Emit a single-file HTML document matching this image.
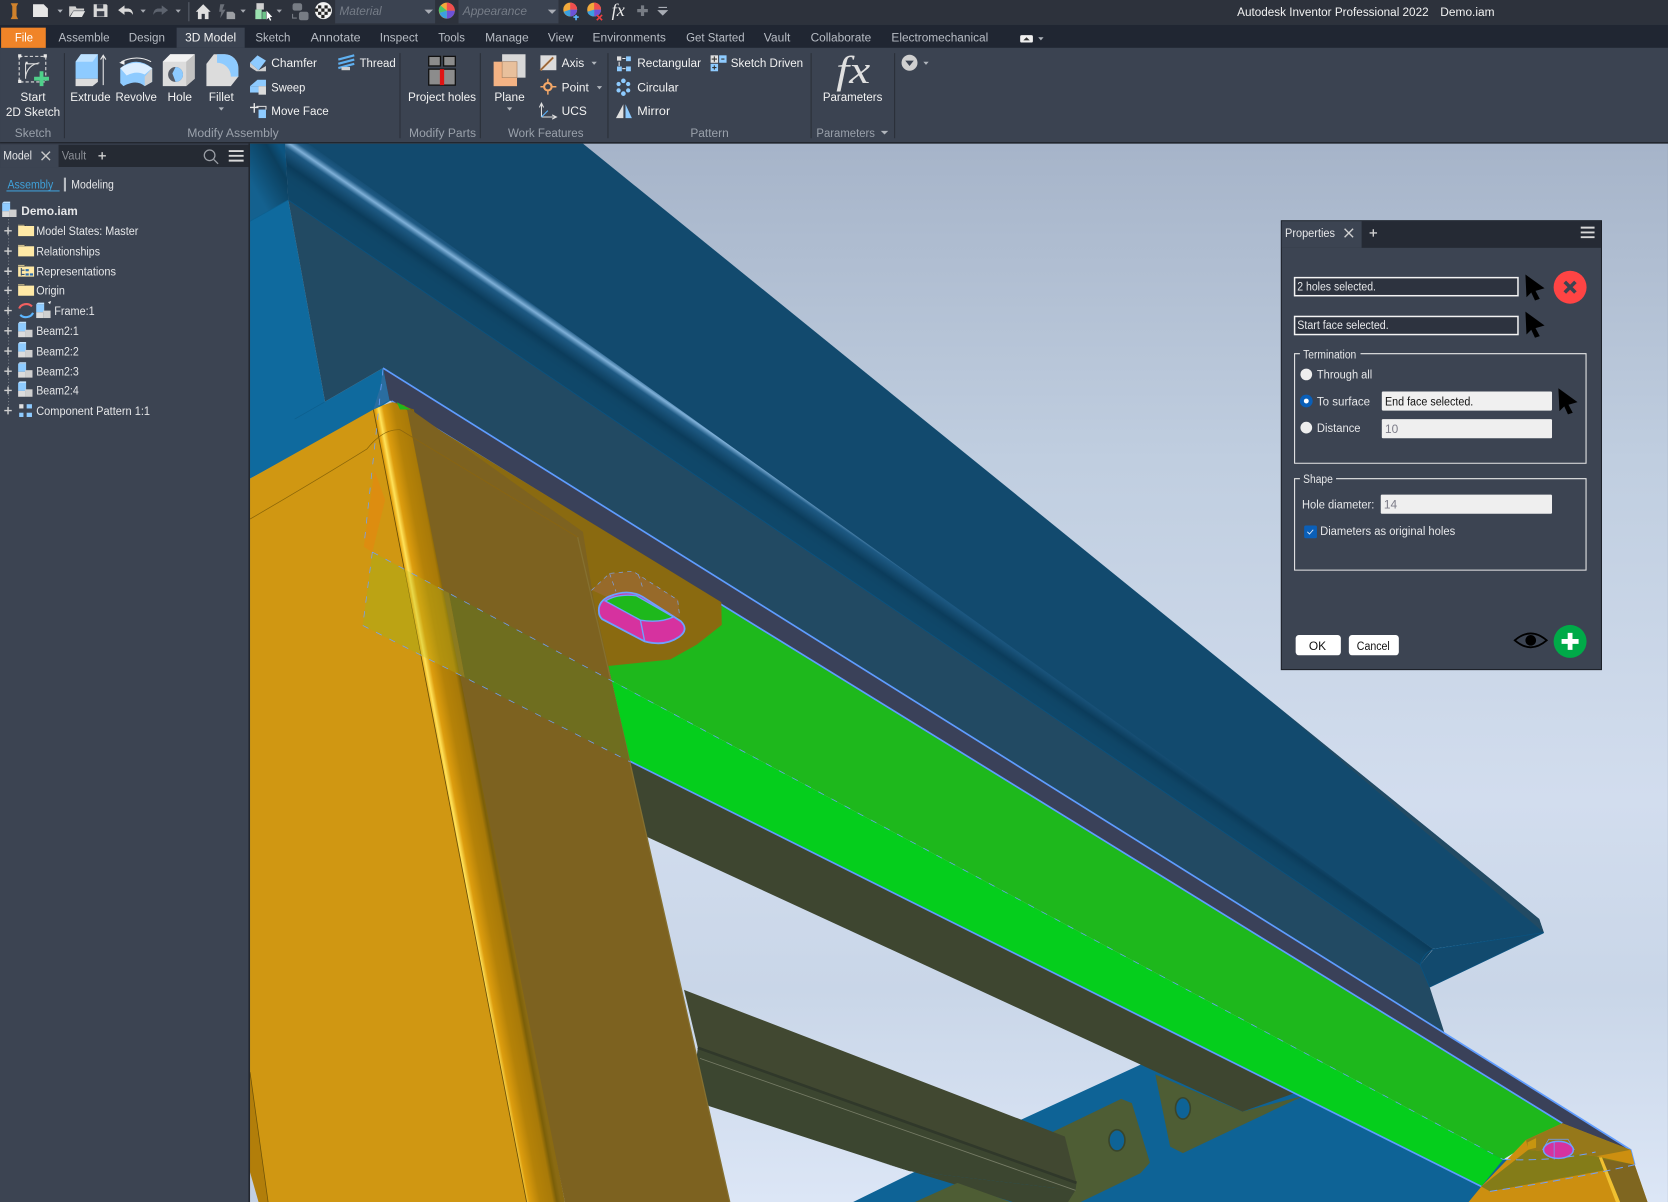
<!DOCTYPE html>
<html lang="en"><head><meta charset="utf-8"><title>Autodesk Inventor Professional 2022 - Demo.iam</title>
<style>html,body{margin:0;padding:0;background:#3c4452;overflow:hidden}svg{display:block}
text{font-family:"Liberation Sans",sans-serif;font-size:11.2px;fill:#e6e7e9}
.t{fill:#b8bdc5}.l{fill:#9aa1ab;text-anchor:middle}.c{text-anchor:middle}.w{fill:#f2f2f2}.d{fill:#111}.g{fill:#8b8f96}
</style></head><body>
<svg xmlns="http://www.w3.org/2000/svg" xmlns:xlink="http://www.w3.org/1999/xlink" width="1668" height="1202" viewBox="0 0 1568 1130">
<defs>
<linearGradient id="bg" x1="0" y1="135" x2="0" y2="1130" gradientUnits="userSpaceOnUse"><stop offset="0" stop-color="#a6b4c9"/><stop offset=".3" stop-color="#c0cee0"/><stop offset=".62" stop-color="#d2ddee"/><stop offset=".8" stop-color="#c9d6e8"/><stop offset="1" stop-color="#dce6f6"/></linearGradient>
<linearGradient id="roll" gradientUnits="userSpaceOnUse" x1="276" y1="124" x2="252" y2="159"><stop offset="0" stop-color="#124a6e"/><stop offset=".16" stop-color="#1f5a84"/><stop offset=".27" stop-color="#7fb0d8"/><stop offset=".38" stop-color="#1e5a84"/><stop offset=".68" stop-color="#0b3c5b"/><stop offset=".85" stop-color="#0f4566"/><stop offset="1" stop-color="#0f4769"/></linearGradient>
<linearGradient id="col" gradientUnits="userSpaceOnUse" x1="351" y1="385" x2="389" y2="378"><stop offset="0" stop-color="#d0920f"/><stop offset=".05" stop-color="#e9a814"/><stop offset=".13" stop-color="#ffe35a"/><stop offset=".24" stop-color="#dd9d0e"/><stop offset=".5" stop-color="#b58208"/><stop offset=".8" stop-color="#a97a08"/><stop offset=".9" stop-color="#7b5f08"/><stop offset="1" stop-color="#8a6a12"/></linearGradient>
<linearGradient id="tl" gradientUnits="userSpaceOnUse" x1="235" y1="170" x2="270" y2="150"><stop offset="0" stop-color="#14618f"/><stop offset=".75" stop-color="#0b3f5e"/><stop offset="1" stop-color="#0d5581"/></linearGradient>
<g id="part"><rect x="0" y="0" width="7.500" height="7.500" fill="#8ecbff"/><path d="M0 0l1.500-1.500h6L7.500 0z" fill="#bfe2ff"/><rect x="0" y="7.500" width="6.500" height="5.500" fill="#dcdcdc"/><rect x="6.500" y="6" width="7" height="7" fill="#d0d0d0"/></g>
<g id="folder"><path d="M0 0h7l1 1.500h7v9.500H0z" fill="#ffe9a6"/><path d="M0 0h7l1 1.500H0z" fill="#2f3540"/><path d="M0 .7h6" stroke="#ffe9a6" stroke-width=".7"/></g>
<g id="plus"><path d="M-3.500 0h7M0-3.500v7" stroke="#d0d0d0" stroke-width="1.300"/></g>
<path id="cur" d="M0 0L18 13L9.500 15.500L13.500 23L9 24.500L5.500 17L1 21.500z" fill="#000"/>
</defs>

<!-- 3D scene -->
<rect x="235" y="135" width="1333" height="995" fill="url(#bg)"/>
<!-- floor plate -->
<polygon points="802,1130 959,1053 1072,1001 1100,940 1500,1130" fill="#0e6396"/>
<!-- flanges and beams -->
<polygon points="1086,1010 1100,1078 1112,1084 1226,1030 1168,1045" fill="#4e5d34"/>
<ellipse cx="1112" cy="1042" rx="7" ry="10" fill="#0e6396" stroke="#3a452a" stroke-width="1.500"/>
<polygon points="592,716 1216,1028 1168,1045 600,783" fill="#3e4630"/>
<polygon points="990,1064 1054,1033 1064,1037 1081,1093 1072,1103 1016,1130 992,1130" fill="#4e5d34"/>
<ellipse cx="1050" cy="1072" rx="7.500" ry="10" fill="#0e6396" stroke="#3a452a" stroke-width="1.500"/>
<polygon points="643,930.600 1001,1068.400 1012,1112 656,985" fill="#414831"/>
<polygon points="656,985 1012,1112 1011,1119 855,1101 667,1040 650,1030" fill="#3c4630"/>
<polygon points="855,1101 1011,1119 1004,1130 952,1130 820,1090" fill="#3c4630"/>
<path d="M656 985L1012 1112" stroke="#30382a" stroke-width="2.500"/><path d="M658 995L1011 1119" stroke="#767c66" stroke-width=".8"/>
<polygon points="860,1130 900,1112 950,1130" fill="#4e5d34"/>
<!-- roof -->
<polygon points="235,135 268,135 271,188 235,208" fill="url(#tl)"/>
<polygon points="235,208 271,188 305.500,377.600 360,346 368,376 352,386 235,450" fill="#0f6a9e"/>
<path d="M235 208L271 188M305 378L277 394" stroke="#0d5f8e" stroke-width=".7" fill="none"/>
<polygon points="271,188 268,135 1347,892 1335,907 1344,928 1358,971.300 360,346 305.500,377.600" fill="#224a63"/>
<polygon points="268,135 548,135 1402,827 1447,864 1451.300,876.700 1347,892" fill="#124a6e"/>
<polygon points="1198,662 1402,827 1447,864 1451.300,876.700" fill="#224a63"/>
<polygon points="268,135 290,135 1347,892 1335,907 271,188" fill="url(#roll)"/>
<polygon points="1335,907 1347.300,892.400 1451.300,876.700 1344,928" fill="#124a6e"/>
<path d="M1335 907Q1338 896 1347.300 892.400L1451.300 876.700M271 188L1335 907L1344 928M1451 877L1344 928" stroke="#0a527f" stroke-width=".8" fill="none"/>
<!-- green -->
<polygon points="368,376 1468.700,1056 1413,1090 575,640 542,503" fill="#1eb81c"/>
<polygon points="575,640 1413,1090 1392.600,1115.400 592,715.600" fill="#05ce1c"/>
<!-- strip -->
<polygon points="360,346 1533,1081 1536.700,1095 1468.700,1056 366,376" fill="#3a4159"/>
<path d="M360 346L1533 1081L1536.700 1095M368 377L1468.700 1056M592 715.600L1392.600 1115.400" stroke="#5f9cff" stroke-width="1.600" fill="none"/>
<polygon points="360,346 366,376 351,385 358,362" fill="#2a6da0"/>
<!-- orange box -->
<polygon points="235,450 351,385 495,1130 235,1130" fill="#d09712"/>
<polygon points="235,1008 252,1130 243,1130 235,1105" fill="#b27e0a"/><polygon points="235,1102 243,1130 235,1130" fill="#c2cfe2"/>
<path d="M235 1008L252 1130" stroke="#6d5208" stroke-width=".7"/>
<polygon points="351,385 360,381 369,378 389,385 531,1130 495,1130" fill="url(#col)"/>
<path d="M351 385L495 1130" stroke="#6a4f07" stroke-width=".8" fill="none"/>
<path d="M235 488Q300 450 345 422Q360 403 376 404" stroke="#8a6508" stroke-width=".7" fill="none"/>
<polygon points="380,381 370,378 678,566 678.500,587.500 655,606 630,620 573,626 565,626 535,500" fill="#8a6a10"/>
<polygon points="382,382 548,500 558,564 592,715.600 686,1130 531,1130" fill="#7d6220"/>
<path d="M376 404L543 505" stroke="#8a6510" stroke-width=".7" fill="none"/>
<polygon points="373,378 386,385 376,385" fill="#1eb81c"/>
<polygon points="352,442 342,514 350,519 362,470" fill="#dd8d10"/>
<path d="M543 505L592 716L686 1130" stroke="#857030" stroke-width="1.200" fill="none"/>
<polygon points="350,519 341,588 395.500,616 380,535" fill="#bca314"/>
<polygon points="380,535 395.500,616 437,637 422,557.500" fill="#b0c020" fill-opacity=".28"/>
<polygon points="422,557.500 437,637 592,716 575,640" fill="#6f6e1f"/>
<path d="M350 519L575 640L1413 1090M341 588L592 716M350 519L341 588M360 347L342 514" stroke="#6fa0ff" stroke-width=".7" stroke-dasharray="6 8" fill="none"/>
<!-- hole -->
<polygon points="556,554.600 573.400,539 595.300,537.300 637.600,564 639,580 600,575" fill="#976a2a"/>
<path d="M556 555L573 539L595 537L637 564L639 580M573 539L579 556M600 540L604 552" stroke="#7ba6f5" stroke-width=".6" stroke-dasharray="4 4" fill="none"/>
<path d="M563 575Q562 566 572 561Q590 553 604 561L640 584Q648 592 638 599Q625 608 606 603L566 582Q563 579 563 575z" fill="#d6329f" stroke="#6fa0ff" stroke-width="1.700"/>
<path d="M569 565Q580 558 598 560L633 580Q620 586 602 583z" fill="#1eb81c" stroke="#6fa0ff" stroke-width="1.300"/>
<path d="M602 583L606 603" stroke="#6fa0ff" stroke-width="1.300"/>
<!-- far corner -->
<polygon points="1392.600,1115.400 1434.600,1071.600 1468.700,1056 1533,1081 1536.700,1095 1548.800,1130 1380.600,1130" fill="#cc8f10"/>
<polygon points="1434.600,1071.600 1468.700,1056 1532.700,1081 1500.700,1087 1436.600,1081" fill="#96781a"/>
<polygon points="1392.600,1115.400 1436.600,1081 1500.700,1087 1536.700,1095 1400.600,1120" fill="#847c18"/>
<polygon points="1502.700,1088.800 1536.700,1095 1548.800,1130 1520.700,1130" fill="#7f6620"/>
<polygon points="1503,1088 1506,1088 1523,1130 1519,1130" fill="#f0c030"/>
<polygon points="1436,1074 1444,1070 1444,1079 1436,1081" fill="#c79510"/>
<path d="M1400.600 1120Q1470 1110 1536.700 1095M1413 1090Q1460 1092 1500 1083" stroke="#6fa0ff" stroke-width=".9" stroke-dasharray="7 5" fill="none"/>
<ellipse cx="1465" cy="1081" rx="14" ry="8" fill="#d6329f" stroke="#6fa0ff" stroke-width="1.400"/>
<path d="M1450 1081L1456 1071L1474 1071L1480 1081M1461 1073V1090" stroke="#6fa0ff" stroke-width=".7" fill="none"/>

<!-- title bar -->
<rect x="0" y="0" width="1568" height="23.500" fill="#2d323c"/>
<rect x="0" y="23.500" width="1568" height="21.500" fill="#202632"/>
<rect x="0" y="45" width="1568" height="88.500" fill="#3b4351"/>
<rect x="0" y="133.500" width="1568" height="1.500" fill="#23272f"/>
<rect x="0" y="135" width="235" height="995" fill="#3c4452"/>
<rect x="0" y="136" width="235" height="21" fill="#252a33"/>
<rect x="0" y="136" width="55" height="21" fill="#3c4452"/>
<rect x="233.500" y="135" width="1.500" height="995" fill="#23272f"/>

<!-- quick access -->
<path d="M10 3h7l-1.500 3v9l1.500 3h-7l1.500-3V6z" fill="#d0822c"/>
<path d="M31 4h10l4 4v8H31z" fill="#e6e6e6"/><path d="M54 9h5l-2.500 3z" fill="#b0b5bc"/>
<path d="M65 6h6l1 2h7v2H69l-4 6z" fill="#d0d0d0"/><path d="M69 10.500h11l-3 5.500H66z" fill="#e2e2e2"/>
<path d="M88 4h12l1 1v11H88z" fill="#d8d8d8"/><rect x="91" y="4" width="6" height="4" fill="#3a3f4a"/><rect x="91" y="10.500" width="7" height="5" fill="#3a3f4a"/>
<path d="M111 9.500l6-4.500v3h4q4 1 4 6-2-3-4-3h-4v3z" fill="#d8d8d8"/><path d="M132 9h5l-2.500 3zM165 9h5l-2.500 3zM226 9h5l-2.500 3zM260 9h5l-2.500 3z" fill="#a5a9b0"/>
<path d="M158 9.500l-6-4.500v3h-4q-4 1-4 6 2-3 4-3h4v3z" fill="#5d636e"/>
<rect x="177" y="2" width="1" height="18" fill="#5a606b"/>
<path d="M184 11l7-7 7 7h-2v7h-3.500v-5h-3v5H186v-7z" fill="#e0e0e0"/>
<path d="M207 4h4l-2 5h3l-5 8 1-6h-2z" fill="#6a6f78"/><path d="M213 11h6l2 2v5h-8z" fill="#9c9fa4"/>
<rect x="241" y="3" width="7" height="6" fill="#d0d0d0"/><rect x="240" y="9" width="6" height="9" fill="#9be2b0"/><rect x="246.500" y="11" width="3.500" height="7" fill="#6cc388"/><path d="M250.500 10v8.500l2-1.800 1.300 2.800 1.200-.6-1.400-2.700 2.300-.3z" fill="#fff"/>
<rect x="275" y="3" width="9" height="7" rx="2" fill="#777c84"/><rect x="281" y="11" width="9" height="8" rx="2" fill="#777c84"/><path d="M275 13v4h4" stroke="#777c84" fill="none"/>
<circle cx="304" cy="10" r="8" fill="#f2f2f2"/><path d="M299 5h3v3h-3zM305 5h3v3h-3zM302 8h3v3h-3zM308 8h3v3h-3zM296 8h3v3h-3zM299 11h3v3h-3zM305 11h3v3h-3zM302 14h3v3h-3z" fill="#222"/>
<rect x="315" y="0" width="94" height="22" fill="#3b4351"/><text x="319" y="14" font-style="italic" style="fill:#767d88">Material</text><path d="M399 9h8l-4 4z" fill="#a9adb5"/>
<circle cx="420" cy="10" r="7.500" fill="#f2a93b"/><path d="M420 10V2.500A7.500 7.500 0 0 1 427.500 10z" fill="#ef4e4e"/><path d="M420 10h7.500A7.500 7.500 0 0 1 420 17.500z" fill="#6d52d8"/><path d="M420 10v7.500A7.500 7.500 0 0 1 413 12z" fill="#3aa0e0"/><path d="M420 10l-7 2A7.500 7.500 0 0 1 414 5z" fill="#47c56b"/>
<rect x="431" y="0" width="94" height="22" fill="#3b4351"/><text x="435" y="14" font-style="italic" style="fill:#767d88">Appearance</text><path d="M515 9h8l-4 4z" fill="#a9adb5"/>
<circle cx="536" cy="9" r="6.500" fill="#f2a93b"/><path d="M536 9V2.500A6.500 6.500 0 0 1 542.500 9z" fill="#ef4e4e"/><path d="M536 9h6.500A6.500 6.500 0 0 1 536 15.500z" fill="#6d52d8"/><path d="M536 9v6.500A6.500 6.500 0 0 1 530 11z" fill="#3aa0e0"/><path d="M539 16h5M541.500 14v5" stroke="#5db6ff" stroke-width="1.500"/>
<circle cx="558.500" cy="9" r="6.500" fill="#f2a93b"/><path d="M558.500 9V2.500A6.500 6.500 0 0 1 565 9z" fill="#ef4e4e"/><path d="M558.500 9h6.500A6.500 6.500 0 0 1 558.500 15.500z" fill="#6d52d8"/><path d="M558.500 9v6.500A6.500 6.500 0 0 1 552 11z" fill="#3aa0e0"/><path d="M561 14l5 5M566 14l-5 5" stroke="#ef4040" stroke-width="1.500"/>
<text x="575" y="15" style="font-family:'Liberation Serif',serif;font-style:italic;font-size:17px;fill:#e8e8e8">fx</text>
<path d="M604 5v10M599 10h10" stroke="#777c84" stroke-width="3"/><path d="M619 7h8M619 10h8l-4 4z" stroke="#a9adb5" fill="#a9adb5"/>
<text x="1163" y="15" textLength="180" lengthAdjust="spacingAndGlyphs" class="w">Autodesk Inventor Professional 2022</text>
<text x="1354" y="15" textLength="51" lengthAdjust="spacingAndGlyphs" class="w">Demo.iam</text>

<!-- tabs -->
<rect x="1" y="26" width="42" height="19" fill="#f08428"/><text x="14" y="39" class="w" textLength="17" lengthAdjust="spacingAndGlyphs" style="fill:#fff">File</text>
<rect x="166" y="26" width="64" height="19" fill="#3b4351"/>
<g class="tabs">
<text x="55" y="39" class="t" textLength="48" lengthAdjust="spacingAndGlyphs">Assemble</text>
<text x="121" y="39" class="t" textLength="34" lengthAdjust="spacingAndGlyphs">Design</text>
<text x="174" y="39" class="w" textLength="48" lengthAdjust="spacingAndGlyphs">3D Model</text>
<text x="240" y="39" class="t" textLength="33" lengthAdjust="spacingAndGlyphs">Sketch</text>
<text x="292" y="39" class="t" textLength="47" lengthAdjust="spacingAndGlyphs">Annotate</text>
<text x="357" y="39" class="t" textLength="36" lengthAdjust="spacingAndGlyphs">Inspect</text>
<text x="412" y="39" class="t" textLength="25" lengthAdjust="spacingAndGlyphs">Tools</text>
<text x="456" y="39" class="t" textLength="41" lengthAdjust="spacingAndGlyphs">Manage</text>
<text x="515" y="39" class="t" textLength="24" lengthAdjust="spacingAndGlyphs">View</text>
<text x="557" y="39" class="t" textLength="69" lengthAdjust="spacingAndGlyphs">Environments</text>
<text x="645" y="39" class="t" textLength="55" lengthAdjust="spacingAndGlyphs">Get Started</text>
<text x="718" y="39" class="t" textLength="25" lengthAdjust="spacingAndGlyphs">Vault</text>
<text x="762" y="39" class="t" textLength="57" lengthAdjust="spacingAndGlyphs">Collaborate</text>
<text x="838" y="39" class="t" textLength="91" lengthAdjust="spacingAndGlyphs">Electromechanical</text>
</g>
<rect x="959" y="33" width="12" height="7" rx="1.500" fill="#f0f0f0"/><path d="M962 38h6l-3-3z" fill="#333"/><path d="M976 35h5l-2.500 3z" fill="#b0b5bc"/>

<!-- ribbon separators -->
<path d="M60.500 50v80M376 50v80M451.500 50v80M571.500 50v80M762.500 50v80M841 50v80" stroke="#2a2f38" stroke-width="1"/>

<!-- ribbon icons -->
<g fill="none" stroke="#e0e0e0"><rect x="18" y="53" width="25" height="24" stroke-dasharray="3 2"/><path d="M24 74V60h12" stroke-width="1"/><path d="M24 72q2-11 13-13" stroke-width="1"/></g>
<path d="M17 51h3v3h-3zM41 51h3v3h-3zM17 75h3v3h-3zM24 58h2v2h-2z" fill="#e8e8e8"/><path d="M39 67v14M32 74h14" stroke="#4fd08a" stroke-width="3.600"/>
<polygon points="71,58 76,51 92,51 92,74 71,74" fill="#8ecbff"/><polygon points="71,58 76,51 92,51 87,58" fill="#bfe2ff"/><polygon points="71,74 92,74 92,77 87,81 71,81" fill="#dcdcdc"/><path d="M97 80V53m-2.500 3l2.500-4 2.500 4" stroke="#e8e8e8" fill="none"/>
<path d="M113 64q15-12 30 0v13l-7 4q-8-7-20 0l-3-3z" fill="#8ecbff"/><path d="M113 64q15-10 30 0l-7 6q-8-4-17 1z" fill="#dceeff"/><path d="M136 72l7-8v13l-7 4z" fill="#cfcfcf"/><path d="M114 58q15-7 28 0" stroke="#f0f0f0" fill="none"/><path d="M112 59l5-2v4z" fill="#f0f0f0"/>
<polygon points="153,58 160,51 183,51 183,74 175,81 153,81" fill="#dcdcdc"/><polygon points="153,58 160,51 183,51 175,58" fill="#f2f2f2"/><polygon points="175,58 183,51 183,74 175,81" fill="#c2c2c2"/><circle cx="165" cy="70" r="7" fill="#555b66"/><path d="M165 63a7 7 0 0 1 0 14l-3-8z" fill="#8ecbff"/>
<path d="M194 60l7-9h10a13 13 0 0 1 13 13v8l-7 9h-23z" fill="#dcdcdc"/><path d="M204 51h7a13 13 0 0 1 13 13v8l-7 0a13 13 0 0 0-13-13z" fill="#8ecbff"/>
<polygon points="235,59 242,52 250,57 243,66" fill="#8ecbff"/><polygon points="235,59 243,66 250,62 250,67 241,67 235,63" fill="#cfcfcf"/>
<polygon points="235,81 242,75 250,75 250,81" fill="#8ecbff"/><rect x="235" y="81" width="8" height="6" fill="#8ecbff"/><rect x="243" y="81" width="7" height="8" fill="#dcdcdc"/>
<path d="M239 97v9M235 101h8" stroke="#e8e8e8" stroke-width="1.300"/><rect x="243" y="103" width="7" height="8" fill="#8ecbff"/><path d="M241 100h9v3" stroke="#e0e0e0" fill="none"/>
<path d="M318 56l15-4M318 60l15-4M318 64l15-4" stroke="#5fb0f0" stroke-width="2"/><rect x="321" y="63" width="8" height="3" fill="#cfcfcf"/>
<g stroke="#111" stroke-width="1.200"><rect x="403" y="53" width="11" height="9" fill="#8c8c8c"/><rect x="417" y="53" width="11" height="9" fill="#8c8c8c"/><rect x="403" y="65" width="12" height="15" fill="#8c8c8c"/><rect x="416" y="65" width="12" height="15" fill="#8c8c8c"/></g><rect x="413.500" y="65" width="4" height="15" fill="#e01414"/><path d="M415.500 52v12" stroke="#444" stroke-dasharray="2 2"/>
<rect x="472" y="51" width="22" height="22" fill="#d8d8d8"/><rect x="464" y="58" width="22" height="23" fill="#f4b384"/><rect x="472" y="58" width="14" height="15" fill="#e8c09c" stroke="#a88060" stroke-width=".6"/>
<rect x="508" y="52" width="15" height="14" fill="#dcdcdc"/><path d="M508 66l12-12" stroke="#c98a4e" stroke-width="2"/><path d="M508 66l12-12" stroke="#59402a" stroke-width=".6"/>
<path d="M515 74v15M508 81.500h15" stroke="#f4a868" stroke-width="1.400"/><circle cx="515" cy="81.500" r="3.500" fill="#3b4351" stroke="#f4a868" stroke-width="2"/>
<path d="M509 110V98M509 110h13" stroke="#e0e0e0" fill="none"/><path d="M507 101l2-4 2 4M519 108l4 2-4 2" stroke="#e0e0e0" fill="none"/><path d="M509 110l6-6" stroke="#5db6ff"/>
<g fill="#8ecbff"><rect x="580" y="53" width="4" height="4" fill="#e0e0e0"/><rect x="588.500" y="53" width="4.500" height="4.500"/><rect x="580" y="62.500" width="4.500" height="4.500"/><rect x="588.500" y="62.500" width="4.500" height="4.500"/></g><path d="M582 58v4M585 55h3M585 64.500h3" stroke="#e8e8e8"/>
<g fill="#8ecbff"><circle cx="586" cy="76" r="2.200"/><circle cx="581.500" cy="79" r="2"/><circle cx="590.500" cy="79" r="2"/><circle cx="581.500" cy="85" r="2"/><circle cx="590.500" cy="85" r="2"/><circle cx="586" cy="88" r="2.200"/></g>
<polygon points="579,111 586,98 586,111" fill="#e0e0e0"/><polygon points="588,98 594,111 588,111" fill="#8ecbff"/>
<rect x="668" y="52" width="7" height="7" fill="#e0e0e0"/><path d="M669 55.500h5M671.500 53v5" stroke="#333"/><rect x="676" y="52" width="7" height="7" fill="#8ecbff"/><rect x="668" y="60" width="7" height="7" fill="#8ecbff"/><path d="M678 55.500h3M669.500 63.500h4M671.500 61.500v4" stroke="#333"/>
<text x="786" y="78" textLength="32" lengthAdjust="spacingAndGlyphs" style="font-family:'Liberation Serif',serif;font-style:italic;font-size:37px;fill:#e0e0e0">fx</text>
<circle cx="855" cy="59" r="7.500" fill="#d0d0d0"/><path d="M851 57h8l-4 5z" fill="#3b4351"/><path d="M868 58h5l-2.500 3z" fill="#b0b5bc"/>
<path d="M205.500 101h5l-2.500 3zM476.500 101h5l-2.500 3zM556 58h5l-2.500 3zM561 81h5l-2.500 3zM828 123h7l-3.500 3.500z" fill="#b0b5bc"/>

<!-- ribbon text -->
<text x="31" y="95" class="c w">Start</text><text x="31" y="109" class="c w" textLength="51" lengthAdjust="spacingAndGlyphs">2D Sketch</text>
<text x="85" y="95" class="c w" textLength="38" lengthAdjust="spacingAndGlyphs">Extrude</text><text x="128" y="95" class="c w" textLength="39" lengthAdjust="spacingAndGlyphs">Revolve</text><text x="169" y="95" class="c w">Hole</text><text x="208" y="95" class="c w">Fillet</text>
<text x="255" y="63" class="w" textLength="43" lengthAdjust="spacingAndGlyphs">Chamfer</text><text x="338" y="63" class="w" textLength="34" lengthAdjust="spacingAndGlyphs">Thread</text><text x="255" y="86" class="w" textLength="32" lengthAdjust="spacingAndGlyphs">Sweep</text><text x="255" y="108" class="w" textLength="54" lengthAdjust="spacingAndGlyphs">Move Face</text>
<text x="415.500" y="95" class="c w" textLength="64" lengthAdjust="spacingAndGlyphs">Project holes</text><text x="479" y="95" class="c w">Plane</text>
<text x="528" y="63" class="w">Axis</text><text x="528" y="86" class="w">Point</text><text x="528" y="108" class="w">UCS</text>
<text x="599" y="63" class="w" textLength="60" lengthAdjust="spacingAndGlyphs">Rectangular</text><text x="599" y="86" class="w" textLength="39" lengthAdjust="spacingAndGlyphs">Circular</text><text x="599" y="108" class="w" textLength="31" lengthAdjust="spacingAndGlyphs">Mirror</text><text x="687" y="63" class="w" textLength="68" lengthAdjust="spacingAndGlyphs">Sketch Driven</text>
<text x="801.500" y="95" class="c w" textLength="56" lengthAdjust="spacingAndGlyphs">Parameters</text>
<text x="31" y="129" class="l">Sketch</text><text x="219" y="129" class="l" textLength="86" lengthAdjust="spacingAndGlyphs">Modify Assembly</text><text x="416" y="129" class="l" textLength="63" lengthAdjust="spacingAndGlyphs">Modify Parts</text><text x="513" y="129" class="l" textLength="71" lengthAdjust="spacingAndGlyphs">Work Features</text><text x="667" y="129" class="l">Pattern</text><text x="795" y="129" class="l" textLength="55" lengthAdjust="spacingAndGlyphs">Parameters</text>

<!-- browser -->
<text x="3" y="150" textLength="27" lengthAdjust="spacingAndGlyphs">Model</text><path d="M39 142.500l8 8M47 142.500l-8 8" stroke="#c8c8c8" stroke-width="1.300"/>
<text x="58" y="150" class="g" textLength="23" lengthAdjust="spacingAndGlyphs">Vault</text><use xlink:href="#plus" href="#plus" x="96" y="146.500"/>
<circle cx="197" cy="146" r="5" fill="none" stroke="#9a9ea5" stroke-width="1.200"/><path d="M201 150l4 4" stroke="#9a9ea5" stroke-width="1.200"/>
<path d="M215 142h14M215 146.500h14M215 151h14" stroke="#d8d8d8" stroke-width="1.800"/>
<text x="7" y="177" style="fill:#3fa0d8" textLength="43" lengthAdjust="spacingAndGlyphs">Assembly</text><rect x="6" y="179" width="50" height="1" fill="#3fa0d8"/><rect x="60" y="167" width="2" height="13" fill="#b8bcc2"/><text x="67" y="177" textLength="40" lengthAdjust="spacingAndGlyphs">Modeling</text>
<use xlink:href="#part" href="#part" x="2" y="191"/><text x="20" y="202" font-weight="700" textLength="53" lengthAdjust="spacingAndGlyphs">Demo.iam</text>
<path d="M8 206V386" stroke="#777c86" stroke-dasharray="1 2"/>
<g id="tree">
<use xlink:href="#plus" href="#plus" x="7.500" y="217"/><use xlink:href="#plus" href="#plus" x="7.500" y="236"/><use xlink:href="#plus" href="#plus" x="7.500" y="255"/><use xlink:href="#plus" href="#plus" x="7.500" y="273"/><use xlink:href="#plus" href="#plus" x="7.500" y="292"/><use xlink:href="#plus" href="#plus" x="7.500" y="311"/><use xlink:href="#plus" href="#plus" x="7.500" y="330"/><use xlink:href="#plus" href="#plus" x="7.500" y="349"/><use xlink:href="#plus" href="#plus" x="7.500" y="367"/><use xlink:href="#plus" href="#plus" x="7.500" y="386"/>
<use xlink:href="#folder" href="#folder" x="17" y="211"/><use xlink:href="#folder" href="#folder" x="17" y="230"/><use xlink:href="#folder" href="#folder" x="17" y="249"/><use xlink:href="#folder" href="#folder" x="17" y="267"/>
<path d="M20 252v7M20 254h3M20 258h3" stroke="#36506e" fill="none"/><rect x="24" y="253" width="3" height="2" fill="#2a6db0"/><rect x="24" y="257" width="3" height="2" fill="#2a6db0"/><rect x="28" y="257" width="3" height="2" fill="#2a6db0"/>
<path d="M18 290a7 6 0 0 1 12-2" stroke="#f06060" stroke-width="2" fill="none"/><path d="M31 294a7 6 0 0 1-12 2" stroke="#5db6ff" stroke-width="2" fill="none"/>
<use xlink:href="#part" href="#part" x="34" y="286"/><path d="M45 284l3-1-1 3z" fill="#eee"/>
<use xlink:href="#part" href="#part" x="17" y="304"/><use xlink:href="#part" href="#part" x="17" y="323"/><use xlink:href="#part" href="#part" x="17" y="342"/><use xlink:href="#part" href="#part" x="17" y="360"/>
<g fill="#8ecbff"><rect x="18" y="380" width="4" height="4" fill="#e0e0e0"/><rect x="25" y="380" width="5" height="4"/><rect x="18" y="388" width="4" height="4"/><rect x="25" y="388" width="5" height="4"/></g>
<text x="34" y="221" textLength="96" lengthAdjust="spacingAndGlyphs">Model States: Master</text>
<text x="34" y="240" textLength="60" lengthAdjust="spacingAndGlyphs">Relationships</text>
<text x="34" y="259" textLength="75" lengthAdjust="spacingAndGlyphs">Representations</text>
<text x="34" y="277" textLength="27" lengthAdjust="spacingAndGlyphs">Origin</text>
<text x="51" y="296" textLength="38" lengthAdjust="spacingAndGlyphs">Frame:1</text>
<text x="34" y="315" textLength="40" lengthAdjust="spacingAndGlyphs">Beam2:1</text>
<text x="34" y="334" textLength="40" lengthAdjust="spacingAndGlyphs">Beam2:2</text>
<text x="34" y="353" textLength="40" lengthAdjust="spacingAndGlyphs">Beam2:3</text>
<text x="34" y="371" textLength="40" lengthAdjust="spacingAndGlyphs">Beam2:4</text>
<text x="34" y="390" textLength="107" lengthAdjust="spacingAndGlyphs">Component Pattern 1:1</text>
</g>

<!-- properties panel -->
<rect x="1204.500" y="207.500" width="301" height="422" fill="#3c4452" stroke="#1c2028"/>
<rect x="1205" y="208" width="300" height="25" fill="#252a34"/><rect x="1205" y="208" width="75" height="25" fill="#3c4452"/>
<text x="1208" y="223" textLength="47" lengthAdjust="spacingAndGlyphs">Properties</text><path d="M1264 215l8 8M1272 215l-8 8" stroke="#d0d0d0" stroke-width="1.300"/><use xlink:href="#plus" href="#plus" x="1291" y="219"/>
<path d="M1486 214h13M1486 218.500h13M1486 223h13" stroke="#d8d8d8" stroke-width="1.800"/>
<rect x="1217" y="261" width="210" height="17" fill="#2d333f" stroke="#f4f4f4" stroke-width="1.400"/><text x="1219.500" y="273" textLength="74" lengthAdjust="spacingAndGlyphs">2 holes selected.</text>
<rect x="1217" y="297.500" width="210" height="17" fill="#2d333f" stroke="#f4f4f4" stroke-width="1.400"/><text x="1219.500" y="309.500" textLength="86" lengthAdjust="spacingAndGlyphs">Start face selected.</text>
<use xlink:href="#cur" href="#cur" x="1434" y="258"/><use xlink:href="#cur" href="#cur" x="1434" y="293"/><use xlink:href="#cur" href="#cur" x="1465" y="365"/>
<circle cx="1476" cy="270" r="15.500" fill="#ff4444"/><path d="M1471 265l10 10M1481 265l-10 10" stroke="#3c4452" stroke-width="3.400"/>
<path d="M1222 332.500h-5v103h274v-103h-212" fill="none" stroke="#e8e8e8" stroke-width="1"/><text x="1225" y="337" textLength="50" lengthAdjust="spacingAndGlyphs">Termination</text>
<circle cx="1228" cy="352" r="5.500" fill="#eeeeee"/><text x="1238" y="356" textLength="52" lengthAdjust="spacingAndGlyphs">Through all</text>
<circle cx="1228" cy="377" r="6" fill="#0a5fb8"/><circle cx="1228" cy="377" r="2.300" fill="#fff"/><text x="1238" y="381" textLength="50" lengthAdjust="spacingAndGlyphs">To surface</text>
<circle cx="1228" cy="402" r="5.500" fill="#eeeeee"/><text x="1238" y="406" textLength="41" lengthAdjust="spacingAndGlyphs">Distance</text>
<rect x="1299" y="368" width="160" height="18" rx="1" fill="#f0f0f0"/><text x="1302" y="381" class="d" textLength="83" lengthAdjust="spacingAndGlyphs">End face selected.</text>
<rect x="1299" y="394" width="160" height="18" rx="1" fill="#efefef"/><text x="1302" y="407" style="fill:#7c7c88">10</text>
<path d="M1222 450h-5v86h274v-86h-235" fill="none" stroke="#e8e8e8" stroke-width="1"/><text x="1225" y="454" textLength="28" lengthAdjust="spacingAndGlyphs">Shape</text>
<text x="1224" y="478" textLength="68" lengthAdjust="spacingAndGlyphs">Hole diameter:</text><rect x="1298" y="465" width="161" height="18" rx="1" fill="#efefef"/><text x="1301" y="478" style="fill:#7c7c88">14</text>
<rect x="1226" y="494" width="12" height="12" rx="1.500" fill="#0a5fb8"/><path d="M1229 500l2 2 3.500-4" stroke="#e8f0ff" stroke-width=".8" fill="none"/><text x="1241" y="503" textLength="127" lengthAdjust="spacingAndGlyphs">Diameters as original holes</text>
<rect x="1218" y="597" width="42.500" height="19" rx="3" fill="#fff"/><text x="1238.500" y="611" class="c d">OK</text>
<rect x="1268" y="597" width="47" height="19" rx="3" fill="#fff"/><text x="1291" y="611" class="c d" textLength="31" lengthAdjust="spacingAndGlyphs">Cancel</text>
<path d="M1424 602q15-13 30 0q-15 13-30 0z" fill="none" stroke="#000" stroke-width="1.700"/><circle cx="1439" cy="602" r="5" fill="#000"/>
<circle cx="1476" cy="603" r="15.500" fill="#00aa48"/><path d="M1476 595v16M1468 603h16" stroke="#fff" stroke-width="4.500"/>
</svg>
</body></html>
